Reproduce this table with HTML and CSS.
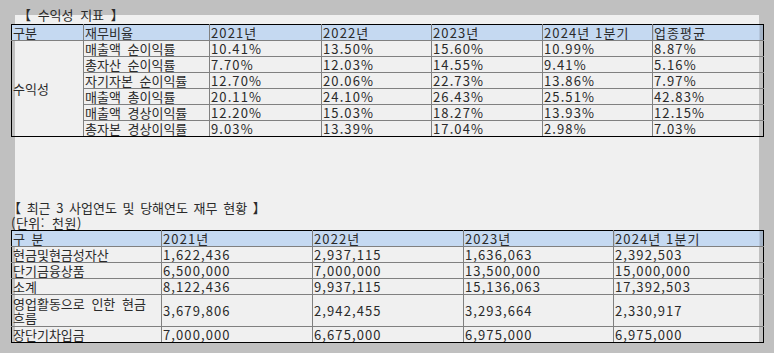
FILE: index.html
```html
<!DOCTYPE html>
<html lang="ko">
<head>
<meta charset="utf-8">
<title>재무 지표</title>
<link rel="stylesheet" href="styles.css">
</head>
<body>
<div class="title title-first">【 수익성 지표 】</div>
<table class="grid grid-ratio">
  <colgroup>
    <col style="width:72px"><col style="width:126px"><col style="width:112px"><col style="width:110px"><col style="width:111px"><col style="width:110px"><col style="width:111px">
  </colgroup>
  <thead>
    <tr><th>구분</th><th>재무비율</th><th>2021년</th><th>2022년</th><th>2023년</th><th>2024년 1분기</th><th class="last">업종평균</th></tr>
  </thead>
  <tbody>
    <tr><td rowspan="6" class="group">수익성</td><td>매출액 순이익률</td><td>10.41%</td><td>13.50%</td><td>15.60%</td><td>10.99%</td><td>8.87%</td></tr>
    <tr><td>총자산 순이익률</td><td>7.70%</td><td>12.03%</td><td>14.55%</td><td>9.41%</td><td>5.16%</td></tr>
    <tr><td>자기자본 순이익률</td><td>12.70%</td><td>20.06%</td><td>22.73%</td><td>13.86%</td><td>7.97%</td></tr>
    <tr><td>매출액 총이익률</td><td>20.11%</td><td>24.10%</td><td>26.43%</td><td>25.51%</td><td>42.83%</td></tr>
    <tr><td>매출액 경상이익률</td><td>12.20%</td><td>15.03%</td><td>18.27%</td><td>13.93%</td><td>12.15%</td></tr>
    <tr><td>총자본 경상이익률</td><td>9.03%</td><td>13.39%</td><td>17.04%</td><td>2.98%</td><td>7.03%</td></tr>
  </tbody>
</table>

<div class="title title-second">【 최근 3 사업연도 및 당해연도 재무 현황 】</div>
<div class="unit">(단위: 천원)</div>
<table class="grid grid-fin">
  <colgroup>
    <col style="width:150px"><col style="width:151px"><col style="width:151px"><col style="width:150px"><col style="width:150px">
  </colgroup>
  <thead>
    <tr><th>구 분</th><th>2021년</th><th>2022년</th><th>2023년</th><th class="last">2024년 1분기</th></tr>
  </thead>
  <tbody>
    <tr><td>현금및현금성자산</td><td>1,622,436</td><td>2,937,115</td><td>1,636,063</td><td>2,392,503</td></tr>
    <tr><td>단기금융상품</td><td>6,500,000</td><td>7,000,000</td><td>13,500,000</td><td>15,000,000</td></tr>
    <tr><td>소계</td><td>8,122,436</td><td>9,937,115</td><td>15,136,063</td><td>17,392,503</td></tr>
    <tr><td class="wrap">영업활동으로 인한 현금<br>흐름</td><td>3,679,806</td><td>2,942,455</td><td>3,293,664</td><td>2,330,917</td></tr>
    <tr><td>장단기차입금</td><td>7,000,000</td><td>6,675,000</td><td>6,975,000</td><td>6,975,000</td></tr>
  </tbody>
</table>
</body>
</html>
```

FILE: styles.css
```css
html, body {
  margin: 0;
  padding: 0;
}

body {
  width: 774px;
  height: 353px;
  overflow: hidden;
  background:
    linear-gradient(#f0f0f0, #f0f0f0) 15px 15px / 744px 327px no-repeat,
    #c0c0c0;
  font-family: "Noto Sans CJK KR", "Noto Sans", sans-serif;
  font-size: 13px;
  word-spacing: 3px;
  color: #2a2a2a;
}

.title {
  line-height: 15px;
  white-space: nowrap;
}

.title-first {
  padding-top: 7px;
  margin-left: 18px;
  height: 17px;
}

.title-second {
  margin-top: 63px;
  margin-left: 8px;
  word-spacing: 2px;
}

.unit {
  margin-left: 11px;
  line-height: 15px;
  letter-spacing: 0.5px;
}

.grid {
  margin-left: 11px;
  border-collapse: collapse;
  table-layout: fixed;
  width: 752px;
  border: 1px solid #000;
}

.grid th,
.grid td {
  border: 1px solid #808080;
  padding: 0 0 0 1px;
  height: 15px;
  line-height: 15px;
  font-weight: normal;
  text-align: left;
  vertical-align: middle;
  white-space: nowrap;
  overflow: visible;
}

.grid-ratio th:nth-child(n+3),
.grid-ratio td:nth-last-child(-n+5),
.grid-fin th:nth-child(n+2),
.grid-fin td:nth-child(n+2) {
  letter-spacing: 1.1px;
  word-spacing: 0;
}

.grid thead th {
  background: #c5d9f1;
  border-bottom: 1px solid #808080;
  border-top: 1px solid #000;
}

.grid thead th.last {
  background: linear-gradient(to right, #c5d9f1 calc(100% - 4px), #a4b3c6 calc(100% - 4px));
}

.grid tr > :first-child {
  border-left: 1px solid #000;
}

.grid tr > :last-child {
  border-right: 1px solid #000;
}

.grid tbody tr:last-child td,
.grid td.group {
  border-bottom: 1px solid #000;
}

.grid td.wrap {
  line-height: 14px;
  height: 30px;
  padding-top: 1px;
}
```
